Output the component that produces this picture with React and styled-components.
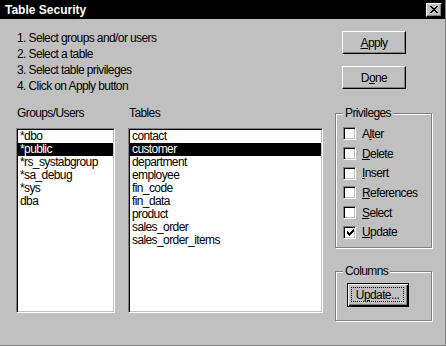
import styled, { createGlobalStyle } from "styled-components";

const GlobalStyle = createGlobalStyle`
  body {
    margin: 0;
    background: #c0c0c0;
  }
  * {
    box-sizing: border-box;
  }
`;

const groups = ["*dbo", "*public", "*rs_systabgroup", "*sa_debug", "*sys", "dba"];
const tables = [
  "contact",
  "customer",
  "department",
  "employee",
  "fin_code",
  "fin_data",
  "product",
  "sales_order",
  "sales_order_items",
];
const privileges = [
  { pre: "A", key: "l", post: "ter", checked: false },
  { pre: "", key: "D", post: "elete", checked: false },
  { pre: "", key: "I", post: "nsert", checked: false },
  { pre: "", key: "R", post: "eferences", checked: false },
  { pre: "", key: "S", post: "elect", checked: false },
  { pre: "", key: "U", post: "pdate", checked: true },
];

const App = () => {
  return (
    <>
      <GlobalStyle />
      <Window>
        <TitleBar>
          <Title>Table Security</Title>
          <CloseButton>
            <svg width="8" height="7" viewBox="0 0 8 7">
              <path
                d="M0 0h2v1h1v1h2V1h1V0h2v1H7v1H6v1H5v1h1v1h1v1h1v1H6V6H5V5H3v1H2v1H0V6h1V5h1V4h1V3H2V2H1V1H0z"
                fill="#000"
              />
            </svg>
          </CloseButton>
        </TitleBar>

        <Body>
          <LeftPane>
            <Steps>
              <li>1. Select groups and/or users</li>
              <li>2. Select a table</li>
              <li>3. Select table privileges</li>
              <li>4. Click on Apply button</li>
            </Steps>

            <ListsRow>
              <ListColumn $width={99}>
                <FieldLabel>Groups/Users</FieldLabel>
                <ListBox>
                  {groups.map((g) => (
                    <ListItem key={g} $selected={g === "*public"}>
                      {g}
                    </ListItem>
                  ))}
                </ListBox>
              </ListColumn>
              <ListColumn $width={195}>
                <FieldLabel>Tables</FieldLabel>
                <ListBox>
                  {tables.map((t) => (
                    <ListItem key={t} $selected={t === "customer"}>
                      {t}
                    </ListItem>
                  ))}
                </ListBox>
              </ListColumn>
            </ListsRow>
          </LeftPane>

          <RightPane>
            <Button>
              <u>A</u>pply
            </Button>
            <Button>
              D<u>o</u>ne
            </Button>

            <GroupBox $height={135} $top={24}>
              <Legend>Privileges</Legend>
              {privileges.map((p) => (
                <CheckRow key={p.key}>
                  <CheckBox>
                    {p.checked && (
                      <svg width="7" height="7" viewBox="0 0 7 7">
                        <path
                          d="M6 0h1v3H6v1H5v1H4v1H3v1H2V6H1V5H0V2h1v1h1v1h1V3h1V2h1V1h1z"
                          fill="#000"
                        />
                      </svg>
                    )}
                  </CheckBox>
                  <span>
                    {p.pre}
                    <u>{p.key}</u>
                    {p.post}
                  </span>
                </CheckRow>
              ))}
            </GroupBox>

            <GroupBox $height={50} $top={23}>
              <Legend>Columns</Legend>
              <DefaultButton>
                <FocusRing>
                  U<u>p</u>date...
                </FocusRing>
              </DefaultButton>
            </GroupBox>
          </RightPane>
        </Body>
      </Window>
    </>
  );
};

const Window = styled.div`
  width: 446px;
  height: 346px;
  background: #c0c0c0;
  border-right: 1px solid #808080;
  border-bottom: 1px solid #808080;
  font-family: "Liberation Sans", Arial, sans-serif;
  font-size: 12px;
  letter-spacing: -0.6px;
  color: #000;
  display: flex;
  flex-direction: column;
`;

const TitleBar = styled.div`
  height: 19px;
  background: #000;
  display: flex;
  align-items: center;
  justify-content: space-between;
  padding: 0 3px 0 5px;
`;

const Title = styled.span`
  color: #fff;
  font-weight: bold;
  font-size: 12px;
  letter-spacing: 0;
  padding-top: 1px;
`;

const CloseButton = styled.div`
  width: 16px;
  height: 14px;
  background: #c0c0c0;
  border: 1px solid;
  border-color: #fff #000 #000 #fff;
  box-shadow: inset -1px -1px #808080;
  display: flex;
  align-items: center;
  justify-content: center;
  padding-right: 1px;
`;

const Body = styled.div`
  flex: 1;
  display: flex;
  padding: 11px 0 0 16px;
`;

const LeftPane = styled.div`
  display: flex;
  flex-direction: column;
`;

const Steps = styled.ul`
  list-style: none;
  margin: 0;
  padding: 0 0 0 1px;
  li {
    line-height: 16px;
    height: 16px;
  }
`;

const ListsRow = styled.div`
  display: flex;
  gap: 13px;
  margin-top: 11px;
`;

const ListColumn = styled.div`
  width: ${({ $width }) => $width}px;
  display: flex;
  flex-direction: column;
`;

const FieldLabel = styled.div`
  line-height: 16px;
  padding-left: 1px;
  margin-bottom: 7px;
`;

const ListBox = styled.div`
  height: 185px;
  background: #fff;
  border: 1px solid;
  border-color: #808080 #fff #fff #808080;
  box-shadow: inset 1px 1px #000, inset -1px -1px #c0c0c0;
  padding: 1px;
`;

const ListItem = styled.div`
  height: 13px;
  line-height: 13px;
  padding-left: 2px;
  white-space: nowrap;
  background: ${({ $selected }) => ($selected ? "#000" : "transparent")};
  color: ${({ $selected }) => ($selected ? "#fff" : "#000")};
`;

const RightPane = styled.div`
  width: 97px;
  margin-left: 12px;
  display: flex;
  flex-direction: column;
`;

const Button = styled.div`
  width: 64px;
  height: 23px;
  margin-left: 7px;
  margin-top: 1px;
  background: #c0c0c0;
  border: 1px solid;
  border-color: #fff #000 #000 #fff;
  box-shadow: inset -1px -1px #808080;
  display: flex;
  align-items: center;
  justify-content: center;
  & + & {
    margin-top: 12px;
  }
`;

const GroupBox = styled.div`
  position: relative;
  height: ${({ $height }) => $height}px;
  margin-top: ${({ $top }) => $top}px;
  border: 1px solid #808080;
  box-shadow: inset 1px 1px #fff, 1px 1px #fff;
  padding: 10px 0 0 7px;
`;

const Legend = styled.span`
  position: absolute;
  top: -9px;
  left: 7px;
  line-height: 16px;
  padding: 0 2px 0 2px;
  background: #c0c0c0;
`;

const CheckRow = styled.div`
  height: 19.7px;
  display: flex;
  align-items: center;
  gap: 6px;
`;

const CheckBox = styled.div`
  width: 13px;
  height: 13px;
  background: #fff;
  border: 1px solid;
  border-color: #808080 #fff #fff #808080;
  box-shadow: inset 1px 1px #000, inset -1px -1px #c0c0c0;
  display: flex;
  align-items: center;
  justify-content: center;
  padding: 1px 0 0 1px;
`;

const DefaultButton = styled.div`
  width: 62px;
  height: 24px;
  margin: 1px 0 0 4px;
  background: #c0c0c0;
  border: 1px solid #000;
  box-shadow: inset 1px 1px #fff, inset -1px -1px #000, inset -2px -2px #808080;
  display: flex;
  align-items: stretch;
  padding: 3px 4px 4px 3px;
`;

const FocusRing = styled.div`
  flex: 1;
  border: 1px dotted #000;
  display: flex;
  align-items: center;
  justify-content: center;
`;

export default App;
